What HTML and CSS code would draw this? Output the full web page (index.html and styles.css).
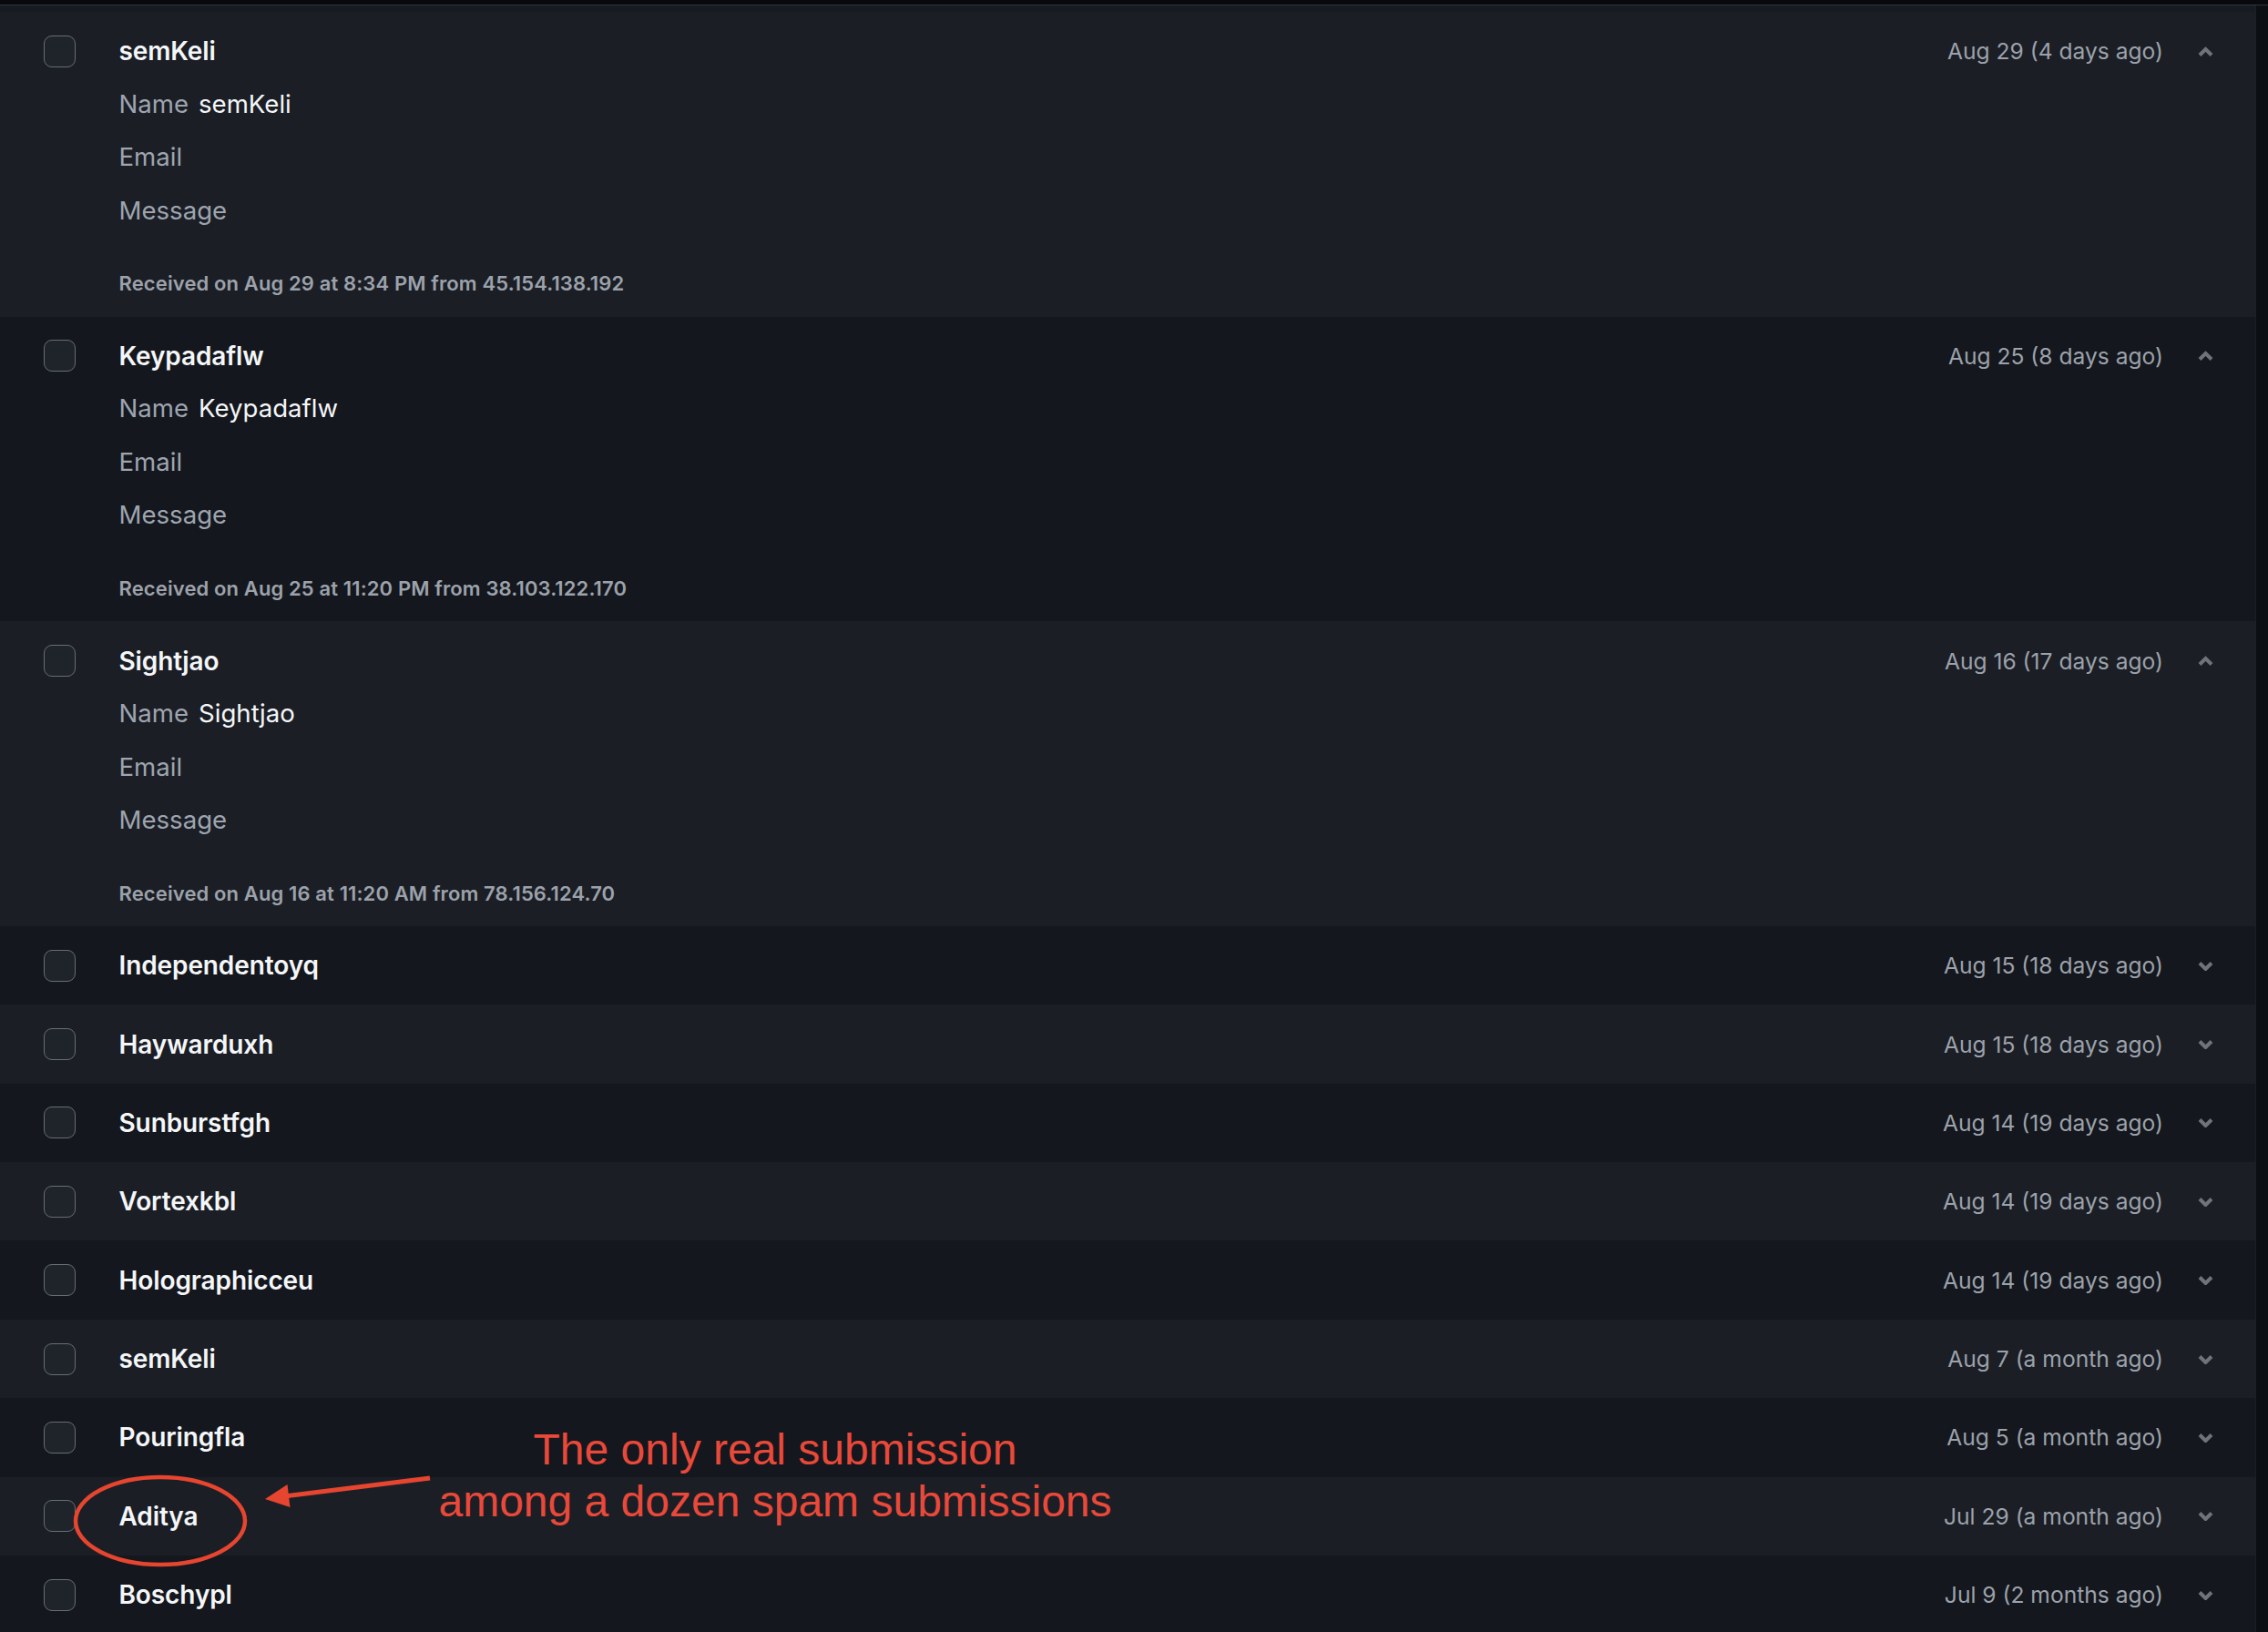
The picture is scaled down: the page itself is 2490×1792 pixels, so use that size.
FILE: index.html
```html
<!DOCTYPE html>
<html lang="en">
<head>
<meta charset="utf-8">
<title>Form submissions</title>
<link rel="stylesheet" href="styles.css">
</head>
<body>
<div class="page">
  <div class="topbar"></div>
  <div class="layout">
    <main class="main">
      <div class="band"></div>
      <ul class="list">
        <li class="row light expanded">
          <span class="check"></span>
          <div class="body">
            <div class="head">
              <span class="title">semKeli</span>
              <span class="date">Aug 29 (4 days ago)</span>
              <svg class="chev" viewBox="0 0 17 11"><polyline points="2,9.5 8.5,3 15,9.5"/></svg>
            </div>
            <div class="details">
              <div class="field"><span class="label">Name</span><span class="value">semKeli</span></div>
              <div class="field"><span class="label">Email</span></div>
              <div class="field"><span class="label">Message</span></div>
            </div>
            <div class="received">Received on Aug 29 at 8:34 PM from 45.154.138.192</div>
          </div>
        </li>
        <li class="row dark expanded">
          <span class="check"></span>
          <div class="body">
            <div class="head">
              <span class="title">Keypadaflw</span>
              <span class="date">Aug 25 (8 days ago)</span>
              <svg class="chev" viewBox="0 0 17 11"><polyline points="2,9.5 8.5,3 15,9.5"/></svg>
            </div>
            <div class="details">
              <div class="field"><span class="label">Name</span><span class="value">Keypadaflw</span></div>
              <div class="field"><span class="label">Email</span></div>
              <div class="field"><span class="label">Message</span></div>
            </div>
            <div class="received">Received on Aug 25 at 11:20 PM from 38.103.122.170</div>
          </div>
        </li>
        <li class="row light expanded">
          <span class="check"></span>
          <div class="body">
            <div class="head">
              <span class="title">Sightjao</span>
              <span class="date">Aug 16 (17 days ago)</span>
              <svg class="chev" viewBox="0 0 17 11"><polyline points="2,9.5 8.5,3 15,9.5"/></svg>
            </div>
            <div class="details">
              <div class="field"><span class="label">Name</span><span class="value">Sightjao</span></div>
              <div class="field"><span class="label">Email</span></div>
              <div class="field"><span class="label">Message</span></div>
            </div>
            <div class="received">Received on Aug 16 at 11:20 AM from 78.156.124.70</div>
          </div>
        </li>
        <li class="row dark">
          <span class="check"></span>
          <div class="body"><div class="head"><span class="title">Independentoyq</span><span class="date">Aug 15 (18 days ago)</span><svg class="chev" viewBox="0 0 17 11"><polyline points="2,2.5 8.5,9 15,2.5"/></svg></div></div>
        </li>
        <li class="row light">
          <span class="check"></span>
          <div class="body"><div class="head"><span class="title">Haywarduxh</span><span class="date">Aug 15 (18 days ago)</span><svg class="chev" viewBox="0 0 17 11"><polyline points="2,2.5 8.5,9 15,2.5"/></svg></div></div>
        </li>
        <li class="row dark">
          <span class="check"></span>
          <div class="body"><div class="head"><span class="title">Sunburstfgh</span><span class="date">Aug 14 (19 days ago)</span><svg class="chev" viewBox="0 0 17 11"><polyline points="2,2.5 8.5,9 15,2.5"/></svg></div></div>
        </li>
        <li class="row light">
          <span class="check"></span>
          <div class="body"><div class="head"><span class="title">Vortexkbl</span><span class="date">Aug 14 (19 days ago)</span><svg class="chev" viewBox="0 0 17 11"><polyline points="2,2.5 8.5,9 15,2.5"/></svg></div></div>
        </li>
        <li class="row dark">
          <span class="check"></span>
          <div class="body"><div class="head"><span class="title">Holographicceu</span><span class="date">Aug 14 (19 days ago)</span><svg class="chev" viewBox="0 0 17 11"><polyline points="2,2.5 8.5,9 15,2.5"/></svg></div></div>
        </li>
        <li class="row light">
          <span class="check"></span>
          <div class="body"><div class="head"><span class="title">semKeli</span><span class="date">Aug 7 (a month ago)</span><svg class="chev" viewBox="0 0 17 11"><polyline points="2,2.5 8.5,9 15,2.5"/></svg></div></div>
        </li>
        <li class="row dark">
          <span class="check"></span>
          <div class="body"><div class="head"><span class="title">Pouringfla</span><span class="date">Aug 5 (a month ago)</span><svg class="chev" viewBox="0 0 17 11"><polyline points="2,2.5 8.5,9 15,2.5"/></svg></div></div>
        </li>
        <li class="row light">
          <span class="check"></span>
          <div class="body"><div class="head"><span class="title">Aditya</span><span class="date">Jul 29 (a month ago)</span><svg class="chev" viewBox="0 0 17 11"><polyline points="2,2.5 8.5,9 15,2.5"/></svg></div></div>
        </li>
        <li class="row dark">
          <span class="check"></span>
          <div class="body"><div class="head"><span class="title">Boschypl</span><span class="date">Jul 9 (2 months ago)</span><svg class="chev" viewBox="0 0 17 11"><polyline points="2,2.5 8.5,9 15,2.5"/></svg></div></div>
        </li>
      </ul>
    </main>
    <div class="gutter"></div>
  </div>

  <svg class="annot-marks" viewBox="0 0 2490 1792" width="2490" height="1792">
    <ellipse cx="176" cy="1670" rx="93" ry="48"/>
    <line x1="472" y1="1623" x2="312" y2="1643"/>
    <polygon points="291,1646 315.5,1630 318.5,1655"/>
  </svg>
  <div class="annot-text">The only real submission<br>among a dozen spam submissions</div>
</div>
</body>
</html>
```

FILE: styles.css
```css
* { box-sizing: border-box; }

html, body {
  margin: 0;
  padding: 0;
  background: #07090d;
  overflow: hidden;
}

.page {
  position: relative;
  width: 2490px;
  height: 1792px;
  overflow: hidden;
  font-family: Inter, "Noto Sans", "DejaVu Sans", sans-serif;
}

.topbar {
  height: 6px;
  background: #07090d;
  border-bottom: 1px solid #31363e;
}

.layout {
  display: flex;
}

.main {
  flex: 1;
  min-width: 0;
}

.band {
  height: 7px;
  background: #161a21;
}

.gutter {
  width: 14px;
  flex: none;
  background: #0c0f13;
  border-left: 1px solid #1c2026;
}

.list {
  list-style: none;
  margin: 0;
  padding: 0;
}

.row {
  display: flex;
  align-items: flex-start;
  column-gap: 47.5px;
  padding: 21.2px 46px 21.2px 48px;
}

.row.light { background: #1b1e25; }
.row.dark { background: #14171d; }

.check {
  flex: none;
  width: 35px;
  height: 35px;
  margin-top: 4.5px;
  border: 1.5px solid #686d75;
  border-radius: 9px;
  background: #1f232a;
}

.body {
  flex: 1;
  min-width: 0;
}

.head {
  display: flex;
  align-items: center;
  height: 44px;
}

.title {
  flex: 1;
  color: #f4f6f8;
  font-size: 28px;
  font-weight: 600;
  letter-spacing: -0.1px;
}

.date {
  color: #9ca2ab;
  font-size: 24.6px;
  font-weight: 400;
}

.chev {
  flex: none;
  width: 17px;
  height: 11px;
  margin-left: 38px;
  fill: none;
  stroke: #6f747c;
  stroke-width: 4;
  stroke-linejoin: miter;
}

.details {
  display: flex;
  flex-direction: column;
  row-gap: 14.5px;
  margin-top: 13.6px;
}

.field {
  display: flex;
  align-items: center;
  height: 44px;
  font-size: 27.6px;
}

.label {
  color: #9ea5af;
  margin-right: 11px;
}

.value {
  color: #f4f6f8;
}

.received {
  margin-top: 43.7px;
  line-height: 30px;
  height: 30px;
  font-size: 22px;
  font-weight: 600;
  letter-spacing: 0.12px;
  color: #9ca2ab;
}

.annot-marks {
  position: absolute;
  left: 0;
  top: 0;
  pointer-events: none;
}

.annot-marks ellipse {
  fill: none;
  stroke: #e6452f;
  stroke-width: 4.5;
}

.annot-marks line {
  stroke: #e6452f;
  stroke-width: 5;
}

.annot-marks polygon {
  fill: #e6452f;
}

.annot-text {
  position: absolute;
  left: 451px;
  top: 1563px;
  width: 800px;
  text-align: center;
  font-family: "Liberation Sans", Arial, sans-serif;
  font-size: 48px;
  line-height: 57px;
  color: #e8493a;
}
```
